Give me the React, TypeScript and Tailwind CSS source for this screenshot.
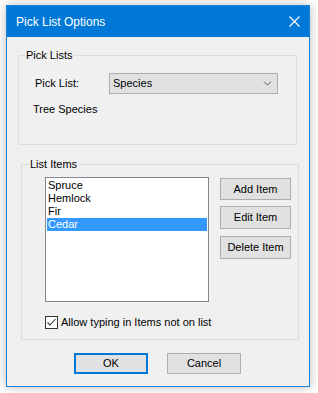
import { ChevronDown } from "lucide-react";

const items = ["Spruce", "Hemlock", "Fir", "Cedar"];

function WinButton({ label, isDefault, className }: { label: string; isDefault?: boolean; className?: string }) {
  const border = isDefault ? "border-2 border-[#0078d7]" : "border border-[#adadad]";
  return (
    <button
      type="button"
      className={`flex items-center justify-center bg-[#e1e1e1] text-[11px] leading-none text-black ${border} ${className ?? ""}`}
    >
      {label}
    </button>
  );
}

export default function App() {
  return (
    <div className="min-h-[393px] w-[318px] bg-white pl-[6px] pt-[5px] font-['Liberation_Sans',Arial,sans-serif]">
      <div className="flex h-[382px] w-[304px] flex-col border border-[#1883d7] bg-[#f0f0f0] shadow-[0_0_10px_rgba(0,0,0,0.28)]">
        {/* title bar */}
        <div className="flex h-[31px] shrink-0 items-center justify-between bg-[#0078d7] pl-[9px] pr-[10px]">
          <span className="text-[12px] text-white">Pick List Options</span>
          <svg width="11" height="11" viewBox="0 0 11 11" className="mr-[-1px]">
            <path d="M0.5 0.5 L10.5 10.5 M10.5 0.5 L0.5 10.5" stroke="#fff" strokeWidth="1.1" fill="none" />
          </svg>
        </div>

        {/* Pick Lists group */}
        <div className="relative ml-[11px] mt-[18px] h-[90px] w-[279px] border border-[#dcdcdc] pl-[16px] pt-[17px] text-[11px] text-black">
          <span className="absolute -top-[8px] left-[6px] bg-[#f0f0f0] px-[1px] leading-[14px]">Pick Lists</span>
          <div className="flex items-center">
            <span className="w-[74px]">Pick List:</span>
            <div className="flex h-[21px] w-[169px] items-center justify-between border border-[#adadad] bg-[#e1e1e1] pl-[3px] pr-[3px]">
              <span>Species</span>
              <ChevronDown size={13} strokeWidth={1.4} color="#333" />
            </div>
          </div>
          <div className="ml-[-2px] mt-[8px] leading-[14px]">Tree Species</div>
        </div>

        {/* List Items group */}
        <div className="relative ml-[14px] mt-[19px] h-[176px] w-[278px] border border-[#dcdcdc] pl-[23px] pt-[12px] text-[11px] text-black">
          <span className="absolute -top-[8px] left-[7px] bg-[#f0f0f0] px-[1px] leading-[14px]">List Items</span>
          <div className="flex">
            <div className="h-[125px] w-[164px] border border-[#828790] bg-white px-[1px] pt-[1px]">
              {items.map((it, i) => (
                <div
                  key={it}
                  className={`h-[13px] pl-[1px] leading-[13px] ${i === 3 ? "bg-[#3399ff] text-white" : ""}`}
                >
                  {it}
                </div>
              ))}
            </div>
            <div className="ml-[11px] mt-[1px] flex flex-col">
              <WinButton label="Add Item" className="h-[22px] w-[71px]" />
              <WinButton label="Edit Item" className="mt-[6px] h-[23px] w-[71px]" />
              <WinButton label="Delete Item" className="mt-[7px] h-[23px] w-[71px]" />
            </div>
          </div>
          <div className="mt-[14px] flex items-center">
            <div className="flex h-[13px] w-[13px] items-center justify-center border border-[#333] bg-white">
              <svg width="11" height="11" viewBox="0 0 11 11">
                <path d="M1.5 5.5 L4 8 L9.5 2" stroke="#333" strokeWidth="1.1" fill="none" />
              </svg>
            </div>
            <span className="ml-[3px] leading-[13px]">Allow typing in Items not on list</span>
          </div>
        </div>

        {/* dialog buttons */}
        <div className="ml-[67px] mt-[13px] flex">
          <WinButton label="OK" isDefault className="h-[21px] w-[74px]" />
          <WinButton label="Cancel" className="ml-[19px] h-[21px] w-[74px]" />
        </div>
      </div>
    </div>
  );
}
